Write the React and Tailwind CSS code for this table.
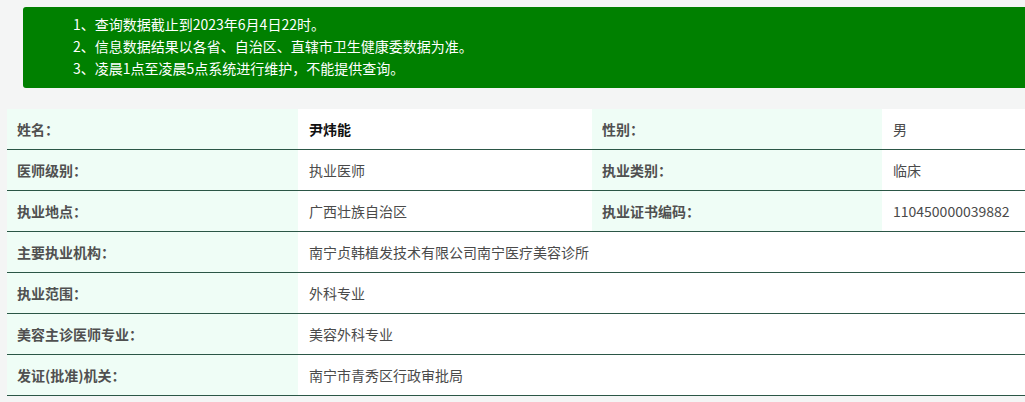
import React from 'react';

const font = { fontFamily: '"Noto Sans CJK SC", "Microsoft YaHei", sans-serif' };

const notes = [
  '1、查询数据截止到2023年6月4日22时。',
  '2、信息数据结果以各省、自治区、直辖市卫生健康委数据为准。',
  '3、凌晨1点至凌晨5点系统进行维护，不能提供查询。',
];

const pairs = [
  [['姓名：', '尹炜能', true], ['性别：', '男']],
  [['医师级别：', '执业医师'], ['执业类别：', '临床']],
  [['执业地点：', '广西壮族自治区'], ['执业证书编码：', '110450000039882']],
];

const wide = [
  ['主要执业机构：', '南宁贞韩植发技术有限公司南宁医疗美容诊所'],
  ['执业范围：', '外科专业'],
  ['美容主诊医师专业：', '美容外科专业'],
  ['发证(批准)机关：', '南宁市青秀区行政审批局'],
];

function Label({ children }) {
  return (
    <div className="bg-[#effdf6] px-[10px] flex items-center font-semibold text-[#505050]">
      {children}
    </div>
  );
}

function Value({ children, bold }) {
  return (
    <div
      className={
        'bg-white px-[11px] flex items-center ' +
        (bold ? 'font-semibold text-[#111]' : 'text-[#4a4a4a]')
      }
    >
      {children}
    </div>
  );
}

export default function App() {
  return (
    <div className="w-[1025px] h-[402px] overflow-hidden bg-[#f4f5f5] text-[14px]" style={font}>
      <div className="pt-[7px] pl-[23px]">
        <div className="w-[1100px] h-[81px] bg-[#008000] rounded-l-[3px] pl-[50px] pt-[6px] text-white">
          {notes.map((n) => (
            <div key={n} className="leading-[22px]">{n}</div>
          ))}
        </div>
      </div>

      <div className="mt-[21px] ml-[7px] w-[1200px]">
        {pairs.map((row, i) => (
          <div
            key={i}
            className="grid grid-cols-[291px_294px_290px_1fr] h-[41px] border-b border-[#2b5646]"
          >
            <Label>{row[0][0]}</Label>
            <Value bold={row[0][2]}>{row[0][1]}</Value>
            <Label>{row[1][0]}</Label>
            <Value>{row[1][1]}</Value>
          </div>
        ))}
        {wide.map(([k, v]) => (
          <div
            key={k}
            className="grid grid-cols-[291px_1fr] h-[41px] border-b border-[#2b5646]"
          >
            <Label>{k}</Label>
            <Value>{v}</Value>
          </div>
        ))}
      </div>
    </div>
  );
}
